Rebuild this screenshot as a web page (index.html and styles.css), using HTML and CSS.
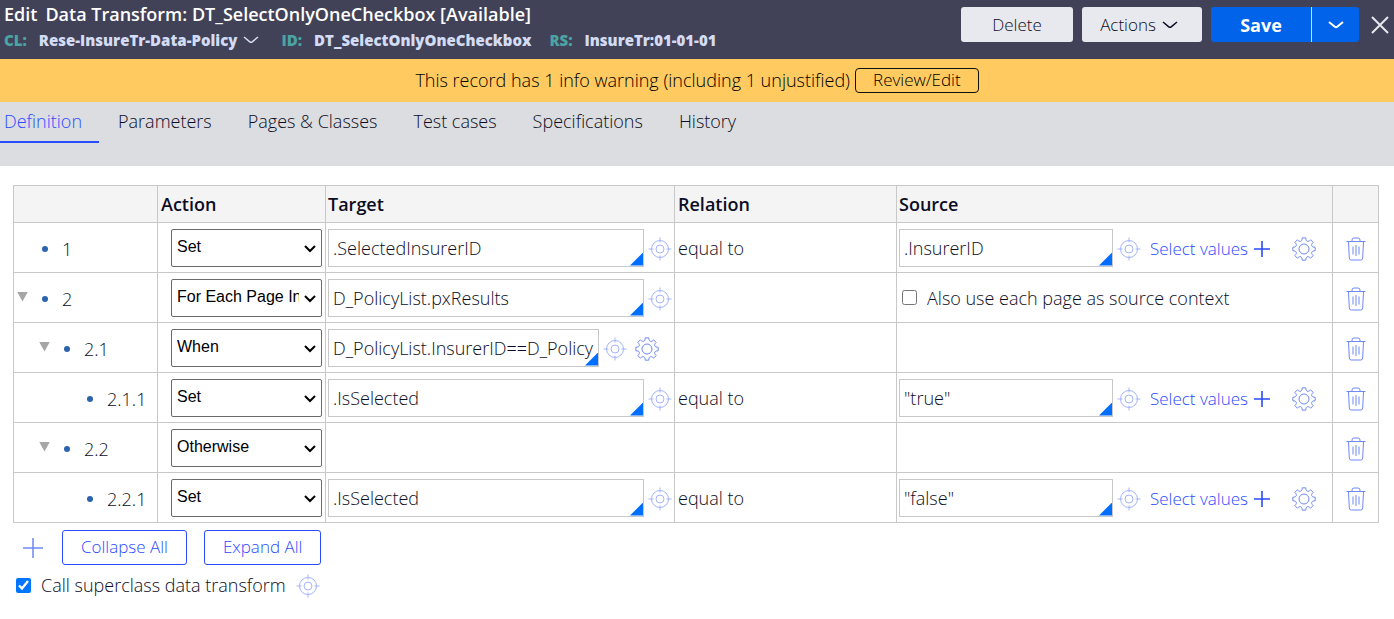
FILE: index.html
```
<!DOCTYPE html>
<html lang="en">
<head>
<meta charset="utf-8">
<title>Data Transform: DT_SelectOnlyOneCheckbox</title>
<link rel="stylesheet" href="styles.css">
</head>
<body>
<svg class="symbols" aria-hidden="true">
  <symbol id="target" viewBox="0 0 24 24"><circle cx="12" cy="12" r="8.5"/><circle cx="12" cy="12" r="4"/><path d="M12 .5v5M12 18.500v5M.5 12h5M18.500 12h5"/></symbol>
  <symbol id="gear" viewBox="0 0 24 24"><circle cx="12" cy="12" r="5"/><path d="M10.230 .84L13.770 .84C13.840 4.630 15.910 5.490 18.640 2.860L21.140 5.360C18.510 8.090 19.370 10.160 23.160 10.230L23.160 13.770C19.370 13.840 18.510 15.910 21.140 18.640L18.640 21.140C15.910 18.510 13.840 19.370 13.770 23.160L10.230 23.160C10.160 19.370 8.090 18.510 5.360 21.140L2.860 18.640C5.490 15.910 4.630 13.840 .84 13.770L.84 10.230C4.630 10.160 5.490 8.090 2.860 5.360L5.360 2.860C8.090 5.490 10.160 4.630 10.230 .84Z"/></symbol>
  <symbol id="trash" viewBox="0 0 20 24"><path d="M.5 4.500h19M6 4.500V3Q6 1 8 1h4Q14 1 14 3v1.500M2.500 4.500l.8 16.500Q3.400 23 5.200 23h9.600Q16.600 23 16.700 21l.8-16.500M7 9.500v8M10 8v11M13 9.500v8"/></symbol>
  <symbol id="plus" viewBox="0 0 20 20"><path d="M10 0v20M0 10h20"/></symbol>
  <symbol id="chevron" viewBox="0 0 16 8"><path d="M1 1l5.800 4.800Q8 6.800 9.200 5.800L15 1"/></symbol>
  <symbol id="arrow" viewBox="0 0 12 8"><path d="M1 1l5 5 5-5"/></symbol>
  <symbol id="close" viewBox="0 0 18 18"><path d="M1 1l16 16M17 1L1 17"/></symbol>
</svg>

<header class="topbar">
  <div class="heading">
    <h1 class="title"><span>Edit</span><span>Data Transform: DT_SelectOnlyOneCheckbox [Available]</span></h1>
    <dl class="meta">
      <div class="meta-item"><dt>CL:</dt><dd>Rese-InsureTr-Data-Policy <svg class="icon chevron"><use href="#chevron"/></svg></dd></div>
      <div class="meta-item"><dt>ID:</dt><dd>DT_SelectOnlyOneCheckbox</dd></div>
      <div class="meta-item"><dt>RS:</dt><dd>InsureTr:01-01-01</dd></div>
    </dl>
  </div>
  <div class="actions">
    <button class="btn delete">Delete</button>
    <button class="btn menu">Actions <svg class="icon chevron"><use href="#chevron"/></svg></button>
    <div class="split">
      <button class="save">Save</button>
      <button class="more" aria-label="More save options"><svg class="icon chevron"><use href="#chevron"/></svg></button>
    </div>
    <button class="close" aria-label="Close"><svg class="icon"><use href="#close"/></svg></button>
  </div>
</header>

<div class="warning">
  <span>This record has 1 info warning (including 1 unjustified)</span>
  <button class="review">Review/Edit</button>
</div>

<nav class="tabs">
  <a class="tab active" href="#definition">Definition</a>
  <a class="tab" href="#parameters">Parameters</a>
  <a class="tab" href="#pages">Pages &amp; Classes</a>
  <a class="tab" href="#tests">Test cases</a>
  <a class="tab" href="#specifications">Specifications</a>
  <a class="tab" href="#history">History</a>
</nav>

<main class="content" id="definition">
  <table class="steps">
    <colgroup><col class="c-step"><col class="c-action"><col class="c-target"><col class="c-relation"><col><col class="c-remove"></colgroup>
    <thead><tr><th></th><th>Action</th><th>Target</th><th>Relation</th><th>Source</th><th></th></tr></thead>
    <tbody>
      <tr>
        <td><div class="step"><span class="toggle"></span><span class="dot"></span>1</div></td>
        <td><div class="picker"><select class="action" aria-label="Action 1"><option>Set</option></select><svg class="icon arrow"><use href="#arrow"/></svg></div></td>
        <td><div class="cell"><span class="field"><input aria-label="Target 1" value=".SelectedInsurerID"></span><button class="tool" aria-label="Open target"><svg class="icon soft"><use href="#target"/></svg></button></div></td>
        <td>equal to</td>
        <td><div class="cell"><span class="field source"><input aria-label="Source 1" value=".InsurerID"></span><button class="tool" aria-label="Open source"><svg class="icon soft"><use href="#target"/></svg></button><a class="values" href="#values">Select values <svg class="icon plus"><use href="#plus"/></svg></a><button class="tool" aria-label="Settings"><svg class="icon"><use href="#gear"/></svg></button></div></td>
        <td><button class="tool remove" aria-label="Delete step 1"><svg class="icon trash"><use href="#trash"/></svg></button></td>
      </tr>
      <tr>
        <td><div class="step"><button class="toggle open" aria-label="Collapse 2"></button><span class="dot"></span>2</div></td>
        <td><div class="picker"><select class="action" aria-label="Action 2"><option>For Each Page In</option></select><svg class="icon arrow"><use href="#arrow"/></svg></div></td>
        <td><div class="cell"><span class="field"><input aria-label="Target 2" value="D_PolicyList.pxResults"></span><button class="tool" aria-label="Open target"><svg class="icon soft"><use href="#target"/></svg></button></div></td>
        <td></td>
        <td><label class="check"><input type="checkbox">Also use each page as source context</label></td>
        <td><button class="tool remove" aria-label="Delete step 2"><svg class="icon trash"><use href="#trash"/></svg></button></td>
      </tr>
      <tr>
        <td><div class="step level-2"><button class="toggle open" aria-label="Collapse 2.1"></button><span class="dot"></span>2.1</div></td>
        <td><div class="picker"><select class="action" aria-label="Action 2.1"><option>When</option></select><svg class="icon arrow"><use href="#arrow"/></svg></div></td>
        <td><div class="cell"><span class="field condition"><input aria-label="Condition 2.1" value="D_PolicyList.InsurerID==D_PolicyList.pxResults"></span><button class="tool" aria-label="Open condition"><svg class="icon soft"><use href="#target"/></svg></button><button class="tool" aria-label="Settings"><svg class="icon"><use href="#gear"/></svg></button></div></td>
        <td></td>
        <td></td>
        <td><button class="tool remove" aria-label="Delete step 2.1"><svg class="icon trash"><use href="#trash"/></svg></button></td>
      </tr>
      <tr>
        <td><div class="step level-3"><span class="toggle"></span><span class="dot"></span>2.1.1</div></td>
        <td><div class="picker"><select class="action" aria-label="Action 2.1.1"><option>Set</option></select><svg class="icon arrow"><use href="#arrow"/></svg></div></td>
        <td><div class="cell"><span class="field"><input aria-label="Target 2.1.1" value=".IsSelected"></span><button class="tool" aria-label="Open target"><svg class="icon soft"><use href="#target"/></svg></button></div></td>
        <td>equal to</td>
        <td><div class="cell"><span class="field source"><input aria-label="Source 2.1.1" value='"true"'></span><button class="tool" aria-label="Open source"><svg class="icon soft"><use href="#target"/></svg></button><a class="values" href="#values">Select values <svg class="icon plus"><use href="#plus"/></svg></a><button class="tool" aria-label="Settings"><svg class="icon"><use href="#gear"/></svg></button></div></td>
        <td><button class="tool remove" aria-label="Delete step 2.1.1"><svg class="icon trash"><use href="#trash"/></svg></button></td>
      </tr>
      <tr>
        <td><div class="step level-2"><button class="toggle open" aria-label="Collapse 2.2"></button><span class="dot"></span>2.2</div></td>
        <td><div class="picker"><select class="action" aria-label="Action 2.2"><option>Otherwise</option></select><svg class="icon arrow"><use href="#arrow"/></svg></div></td>
        <td></td>
        <td></td>
        <td></td>
        <td><button class="tool remove" aria-label="Delete step 2.2"><svg class="icon trash"><use href="#trash"/></svg></button></td>
      </tr>
      <tr>
        <td><div class="step level-3"><span class="toggle"></span><span class="dot"></span>2.2.1</div></td>
        <td><div class="picker"><select class="action" aria-label="Action 2.2.1"><option>Set</option></select><svg class="icon arrow"><use href="#arrow"/></svg></div></td>
        <td><div class="cell"><span class="field"><input aria-label="Target 2.2.1" value=".IsSelected"></span><button class="tool" aria-label="Open target"><svg class="icon soft"><use href="#target"/></svg></button></div></td>
        <td>equal to</td>
        <td><div class="cell"><span class="field source"><input aria-label="Source 2.2.1" value='"false"'></span><button class="tool" aria-label="Open source"><svg class="icon soft"><use href="#target"/></svg></button><a class="values" href="#values">Select values <svg class="icon plus"><use href="#plus"/></svg></a><button class="tool" aria-label="Settings"><svg class="icon"><use href="#gear"/></svg></button></div></td>
        <td><button class="tool remove" aria-label="Delete step 2.2.1"><svg class="icon trash"><use href="#trash"/></svg></button></td>
      </tr>
    </tbody>
  </table>

  <div class="footer">
    <button class="tool add" aria-label="Add step"><svg class="icon"><use href="#plus"/></svg></button>
    <button class="outline">Collapse All</button>
    <button class="outline">Expand All</button>
  </div>
  <div class="superclass">
    <label class="check"><input type="checkbox" checked>Call superclass data transform</label>
    <button class="tool" aria-label="Open superclass transform"><svg class="icon soft"><use href="#target"/></svg></button>
  </div>
</main>
</body>
</html>
```

FILE: styles.css
```
* { box-sizing: border-box; }

body {
  margin: 0;
  background: #fff;
  color: #0c0d24;
  font: 300 18px/24px "Open Sans", sans-serif;
}

button {
  margin: 0;
  padding: 0;
  border: 0;
  background: none;
  color: inherit;
  font: inherit;
}

.symbols { position: absolute; width: 0; height: 0; }

.icon {
  display: block;
  width: 24px;
  height: 24px;
  fill: none;
  stroke: currentColor;
  stroke-width: 1;
}

.chevron { width: 16px; height: 8px; stroke-width: 2; }

/* Header */
.topbar {
  display: flex;
  justify-content: space-between;
  height: 59px;
  padding: 2px 5px 0 4px;
  background: #414257;
  color: #fff;
}

.title {
  display: flex;
  gap: 8px;
  margin: 0;
  font-size: 18px;
  font-weight: 600;
  line-height: 24px;
}

.meta {
  display: flex;
  gap: 18px;
  margin: 2px 0 0;
  font-size: 15px;
  font-weight: 800;
  line-height: 24px;
}

.meta-item { display: flex; gap: 12px; }
.meta dt { color: #4ba3a3; }
.meta dd { display: flex; align-items: center; gap: 6px; margin: 0; color: #d3dcf4; }
.meta .chevron { margin-right: 4px; stroke-width: 1.5; }

.actions { display: flex; align-items: flex-start; gap: 9px; padding-top: 5px; }

.btn {
  display: flex;
  align-items: center;
  justify-content: center;
  gap: 6px;
  height: 35px;
  border-radius: 3px;
  background: #e8e9ee;
  color: #0c0d24;
  font-size: 17px;
}

.delete { width: 112px; }
.menu { width: 120px; padding-right: 6px; }
.menu .chevron { stroke-width: 1.5; }

.split {
  display: flex;
  height: 35px;
  border-radius: 3px;
  background: #0063ea;
  font-size: 18px;
  font-weight: 700;
}

.save { width: 100px; }
.more { display: grid; place-items: center; width: 48px; border-left: 1px solid #d3dcf4; }
.close { display: grid; place-items: center; height: 35px; margin-left: 3px; color: #e8e9ee; }
.close .icon { width: 18px; height: 18px; stroke-width: 2; }

/* Warning */
.warning {
  display: flex;
  align-items: center;
  justify-content: center;
  gap: 5px;
  height: 43px;
  padding-bottom: 1px;
  background: #ffca5f;
  color: #000;
}

.review {
  height: 25px;
  padding: 0 17px;
  border: 1px solid #111;
  border-radius: 4px;
  font-size: 17px;
  line-height: 22px;
}

/* Tabs */
.tabs { display: flex; gap: 19px; height: 64px; background: #dcdde1; }
.tab {
  height: 41px;
  padding: 7px 17px 0 0;
  border-bottom: 2px solid transparent;
  color: inherit;
  text-decoration: none;
}
.tab.active { padding-left: 4px; border-color: #2b4bff; color: #2b4bff; }

/* Steps */
.content { padding: 19px 15px 0 13px; }

.steps { width: 100%; table-layout: fixed; border-collapse: collapse; }
.c-step { width: 144px; }
.c-action { width: 168px; }
.c-target { width: 349px; }
.c-relation { width: 222px; }
.c-remove { width: 46px; }
.steps th, .steps td { padding: 0 3px; border: 1px solid #c8c8c8; text-align: left; }
.steps th:nth-child(odd), .steps td:nth-child(odd) { padding-left: 2px; }
.steps th { height: 37px; background: #f4f4f4; font-weight: 600; }
.steps td { height: 50px; }

.step { display: flex; align-items: center; padding: 2px 0 0 1px; }
.level-2 { padding-left: 23px; }
.level-3 { padding-left: 46px; }
.toggle { width: 11px; height: 10px; }
.open { margin-bottom: 4px; background: #a6a6a6; clip-path: polygon(0 0, 100% 0, 50% 100%); }
.dot { width: 6px; height: 6px; margin: 0 14px; border-radius: 50%; background: #2c63ad; }

.picker { position: relative; width: 151px; margin-left: 10px; }
.action {
  display: block;
  width: 100%;
  height: 38px;
  padding: 0 22px 2px 5px;
  border: 1px solid #6b6b6b;
  border-radius: 2px;
  appearance: none;
  background: #fff;
  color: #000;
  font: 400 16px "Liberation Sans", Arial, sans-serif;
}
.arrow {
  position: absolute;
  top: 16px;
  right: 6px;
  width: 12px;
  height: 8px;
  color: #000;
  stroke-width: 2;
  pointer-events: none;
}

.cell { display: flex; align-items: center; gap: 4px; }
.field { position: relative; flex: none; width: 316px; }
.field.source { width: 214px; }
.field.condition { width: 271px; }
.field input {
  display: block;
  width: 100%;
  height: 38px;
  padding: 0 4px;
  border: 1px solid #c8c8c8;
  background: #fff;
  color: inherit;
  font: inherit;
}
.field::after {
  content: "";
  position: absolute;
  right: 1px;
  bottom: 1px;
  width: 13px;
  height: 13px;
  background: #006eff;
  clip-path: polygon(100% 0, 100% 100%, 0 100%);
}

.tool { flex: none; padding-top: 2px; color: #6f89f5; }
.tool .soft { color: #a5b4fb; }
.condition ~ .tool + .tool { margin-left: 4px; }

.values {
  display: flex;
  align-items: center;
  gap: 6px;
  margin: 0 18px 0 5px;
  padding-top: 2px;
  color: #2b4bff;
  font-size: 17px;
  text-decoration: none;
}
.values .plus { width: 16px; height: 16px; stroke-width: 2; }
.trash { width: 20px; }
.remove { display: block; margin: 0 auto; }

.check { display: flex; align-items: center; gap: 10px; }
.check input { width: 15px; height: 15px; margin: 0 0 0 3px; accent-color: #0075ff; }

/* Footer */
.footer { display: flex; align-items: center; gap: 17px; padding: 7px 0 0 10px; }
.add { padding: 0 2px 0 0; }
.add .icon { width: 20px; height: 20px; stroke-width: 1.5; }
.outline {
  height: 35px;
  padding: 0 18px 2px;
  border: 1px solid #2b4bff;
  border-radius: 3px;
  color: #2b4bff;
  font-size: 17px;
}
.superclass { display: flex; align-items: center; gap: 10px; padding-top: 7px; }
```
